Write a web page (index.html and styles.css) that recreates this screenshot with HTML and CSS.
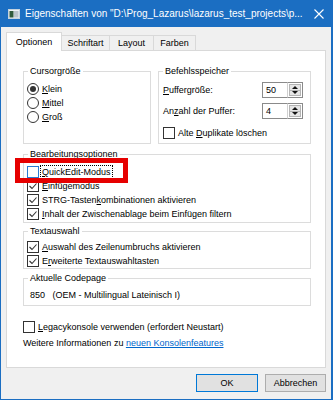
FILE: index.html
```html
<!DOCTYPE html>
<html lang="de">
<head>
<meta charset="utf-8">
<title>Eigenschaften</title>
<link rel="stylesheet" href="styles.css">
</head>
<body>
<div class="window">
  <div class="titlebar">
    <svg class="appicon" width="12" height="10" viewBox="0 0 12 10"><rect x="0.5" y="0.5" width="11" height="9" fill="#eef2f5" stroke="#c4d2de"/><rect x="1.5" y="2" width="4" height="6.5" fill="#2f5a3c"/><rect x="6" y="2" width="4.5" height="6.5" fill="#b9c3cb"/></svg>
    <span class="title">Eigenschaften von "D:\Prog_Lazarus\lazarus_test_projects\p...</span>
    <svg class="close" width="10" height="10" viewBox="0 0 10 10"><path d="M0.5 0.5 L9.5 9.5 M9.5 0.5 L0.5 9.5" stroke="#fff" stroke-width="1.1"/></svg>
  </div>
  <div class="content">
    <div class="tabs">
      <div class="tab active t-opt">Optionen</div>
      <div class="tab t-font">Schriftart</div>
      <div class="tab t-layout">Layout</div>
      <div class="tab t-colors">Farben</div>
    </div>
    <div class="panel">
      <div class="toprow">
        <div class="group">
          <span class="legend">Cursorgröße</span>
          <div class="in-cursor">
            <div class="opt"><span class="rb on"></span><span><u>K</u>lein</span></div>
            <div class="opt"><span class="rb"></span><span><u>M</u>ittel</span></div>
            <div class="opt"><span class="rb"></span><span><u>G</u>roß</span></div>
          </div>
        </div>
        <div class="group">
          <span class="legend">Befehlsspeicher</span>
          <div class="in-buffer">
            <div class="spinrow">
              <span><u>P</u>uffergröße:</span>
              <div class="spin"><div class="spin-edit">50</div><div class="spin-btn"><span class="half up"></span><span class="half down"></span></div></div>
            </div>
            <div class="spinrow">
              <span>An<u>z</u>ahl der Puffer:</span>
              <div class="spin"><div class="spin-edit">4</div><div class="spin-btn"><span class="half up"></span><span class="half down"></span></div></div>
            </div>
            <div class="opt dup"><span class="cb"></span><span>Alte <u>D</u>uplikate löschen</span></div>
          </div>
        </div>
      </div>

      <div class="group g-edit">
        <span class="legend">Bearbeitungsoptionen</span>
        <div class="in-edit">
          <div class="opt"><span class="cb hover"></span><span class="focus"><u>Q</u>uickEdit-Modus</span></div>
          <div class="opt"><span class="cb"><svg viewBox="0 0 10 10"><path d="M1.5 5 L4 7.5 L8.5 2.5" fill="none" stroke="#333" stroke-width="1.1"/></svg></span><span><u>E</u>infügemodus</span></div>
          <div class="opt"><span class="cb"><svg viewBox="0 0 10 10"><path d="M1.5 5 L4 7.5 L8.5 2.5" fill="none" stroke="#333" stroke-width="1.1"/></svg></span><span>STRG-Tasten<u>k</u>ombinationen aktivieren</span></div>
          <div class="opt"><span class="cb"><svg viewBox="0 0 10 10"><path d="M1.5 5 L4 7.5 L8.5 2.5" fill="none" stroke="#333" stroke-width="1.1"/></svg></span><span><u>I</u>nhalt der Zwischenablage beim Einfügen filtern</span></div>
        </div>
      </div>

      <div class="group g-select">
        <span class="legend">Textauswahl</span>
        <div class="in-select">
          <div class="opt"><span class="cb"><svg viewBox="0 0 10 10"><path d="M1.5 5 L4 7.5 L8.5 2.5" fill="none" stroke="#333" stroke-width="1.1"/></svg></span><span><u>A</u>uswahl des Zeilenumbruchs aktivieren</span></div>
          <div class="opt"><span class="cb"><svg viewBox="0 0 10 10"><path d="M1.5 5 L4 7.5 L8.5 2.5" fill="none" stroke="#333" stroke-width="1.1"/></svg></span><span>E<u>r</u>weiterte Textauswahltasten</span></div>
        </div>
      </div>

      <div class="group g-codepage">
        <span class="legend">Aktuelle Codepage</span>
        <div class="in-codepage">
          <div class="cp">850   (OEM - Multilingual Lateinisch I)</div>
        </div>
      </div>

      <div class="opt legacy"><span class="cb"></span><span><u>L</u>egacykonsole verwenden (erfordert Neustart)</span></div>
      <div class="info">Weitere Informationen zu <a href="#" class="link">neuen Konsolenfeatures</a></div>
    </div>
    <div class="buttons">
      <div class="btn ok">OK</div>
      <div class="btn cancel">Abbrechen</div>
    </div>
  </div>
  <div class="highlight"></div>
</div>
</body>
</html>
```

FILE: styles.css
```css
* { box-sizing: border-box; }

body {
  margin: 0;
  font-family: "Liberation Sans", Arial, sans-serif;
  font-size: 9px;
  color: #000;
  background: #fff;
}

.window {
  position: relative;
  width: 333px;
  height: 400px;
  background: #f0f0f0;
  border-left: 1px solid #1b6ec2;
  border-right: 2px solid #1b6ec2;
  border-bottom: 1px solid #1b6ec2;
  display: flex;
  flex-direction: column;
}

.titlebar {
  height: 27px;
  flex: none;
  background: #1b6ec2;
  color: #fff;
  display: flex;
  align-items: center;
  padding-left: 7px;
}

.appicon { flex: none; }

.title {
  flex: 1;
  margin-left: 5px;
  font-size: 10px;
  white-space: nowrap;
  overflow: hidden;
}

.close {
  flex: none;
  margin-right: 7px;
}

.content {
  flex: 1;
  padding: 5px 5px 0;
  display: flex;
  flex-direction: column;
}

.tabs {
  display: flex;
  align-items: flex-end;
  height: 18px;
}

.tab {
  height: 15px;
  border: 1px solid #d9d9d9;
  border-bottom: none;
  margin-left: -1px;
  background: #f0f0f0;
  display: flex;
  align-items: center;
  justify-content: center;
}

.tab:first-child { margin-left: 0; }

.tab.active {
  height: 19px;
  margin-bottom: -1px;
  background: #fff;
  position: relative;
  z-index: 1;
}

.t-opt { width: 56px; }
.t-font { width: 49px; }
.t-layout { width: 45px; }
.t-colors { width: 43px; }

.panel {
  height: 318px;
  flex: none;
  background: #fff;
  border: 1px solid #d9d9d9;
  padding: 20px 14px 0 16px;
  display: flex;
  flex-direction: column;
}

.toprow {
  display: grid;
  grid-template-columns: 128px 153px;
  column-gap: 7px;
  height: 73px;
}

.group {
  border: 1px solid #dcdcdc;
  background: #fff;
}

.legend {
  display: block;
  width: max-content;
  margin: -7px 0 0 4px;
  padding: 0 2px;
  line-height: 12px;
  background: #fff;
}

.g-edit { margin-top: 10px; height: 69px; }
.g-select { margin-top: 8px; height: 38px; }
.g-codepage { margin-top: 9px; height: 28px; }

.in-cursor { padding: 5px 0 0 3px; }
.in-buffer { padding: 5px 7px 0 4px; }
.in-edit { padding: 5px 0 0 3px; }
.in-select { padding: 3px 0 0 3px; }
.in-codepage { padding: 4px 0 0 6px; }

.opt {
  display: flex;
  align-items: center;
  height: 14px;
  gap: 3px;
  white-space: nowrap;
}

.cb {
  width: 12px;
  height: 12px;
  flex: none;
  border: 1px solid #333;
  background: #fff;
  display: flex;
}

.cb svg { width: 10px; height: 10px; }

.cb.hover { border-color: #2a7ad2; }

.rb {
  width: 12px;
  height: 12px;
  flex: none;
  border: 1px solid #333;
  border-radius: 50%;
  background: #fff;
  display: flex;
  align-items: center;
  justify-content: center;
}

.rb.on::after {
  content: "";
  width: 6px;
  height: 6px;
  border-radius: 50%;
  background: #333;
}

.focus {
  outline: 1px dotted #000;
  outline-offset: 1px;
}

.spinrow {
  display: flex;
  justify-content: space-between;
  align-items: center;
  height: 16px;
}

.spinrow + .spinrow { margin-top: 5px; }

.spin {
  display: flex;
  height: 16px;
}

.spin-edit {
  width: 25px;
  border: 1px solid #8a8a8a;
  border-right: none;
  background: #fff;
  padding-left: 3px;
  line-height: 14px;
}

.spin-btn {
  width: 16px;
  border: 1px solid #8a8a8a;
  border-left: 1px solid #d0d0d0;
  background: #fff;
  padding: 1px;
  display: flex;
  flex-direction: column;
}

.half {
  flex: 1;
  background: #e6e6e6;
  border: 1px solid #b4b4b4;
  display: flex;
  align-items: center;
  justify-content: center;
}

.half.down { border-top: none; }

.half.up::after {
  content: "";
  border-left: 3px solid transparent;
  border-right: 3px solid transparent;
  border-bottom: 3px solid #111;
}

.half.down::after {
  content: "";
  border-left: 3px solid transparent;
  border-right: 3px solid transparent;
  border-top: 3px solid #111;
}

.dup { margin-top: 7px; }

.cp {
  white-space: pre;
  height: 14px;
  line-height: 14px;
}

.legacy { margin-top: 14px; }

.info {
  margin-top: 2px;
  height: 14px;
  line-height: 14px;
}

.link {
  color: #0066cc;
  text-decoration: underline;
}

.buttons {
  display: flex;
  justify-content: flex-end;
  gap: 7px;
  margin-top: 6px;
}

.btn {
  height: 18px;
  border: 1px solid #adadad;
  background: #e1e1e1;
  display: flex;
  align-items: center;
  justify-content: center;
}

.btn.ok { width: 62px; border-color: #0078d7; }
.btn.cancel { width: 61px; }

.highlight {
  position: absolute;
  left: 14px;
  top: 158px;
  width: 113px;
  height: 25px;
  border: 5px solid #e60000;
}
```
